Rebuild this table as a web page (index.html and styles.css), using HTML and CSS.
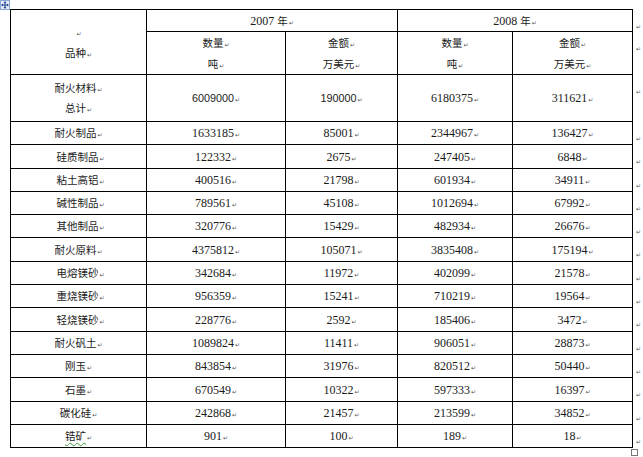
FILE: index.html
```html
<!DOCTYPE html>
<html lang="zh-CN">
<head>
<meta charset="utf-8">
<title>耐火材料进出口</title>
<link rel="stylesheet" href="styles.css">
</head>
<body>
<div class="page">
  <span class="move-handle">
    <svg width="10" height="10" viewBox="0 0 10 10">
      <rect x="0.5" y="0.5" width="9" height="9" fill="#e8eef8" stroke="#8aa6d6"/>
      <path d="M5 1.5v7M1.5 5h7" stroke="#1f3f8f" stroke-width="1"/>
      <path d="M5 1.5l-1.5 1.5h3zM5 8.5l-1.5-1.5h3zM1.5 5l1.5-1.5v3zM8.5 5l-1.5-1.5v3z" fill="#1f3f8f"/>
    </svg>
  </span>
  <table class="grid">
    <colgroup>
      <col class="c-name"><col class="c-q7"><col class="c-a7"><col class="c-q8"><col class="c-a8"><col class="c-end">
    </colgroup>
    <tr class="h1">
      <td rowspan="2" class="cjk two"><div><i class="pm">↵</i></div><div>品种<i class="pm">↵</i></div></td>
      <td colspan="2" class="year">2007 <span class="cjk">年</span><i class="pm">↵</i></td>
      <td colspan="2" class="year">2008 <span class="cjk">年</span><i class="pm">↵</i></td>
      <td class="end"><i class="pm">↵</i></td>
    </tr>
    <tr class="h2">
      <td class="cjk two"><div>数量<i class="pm">↵</i></div><div>吨<i class="pm">↵</i></div></td>
      <td class="cjk two"><div>金额<i class="pm">↵</i></div><div>万美元<i class="pm">↵</i></div></td>
      <td class="cjk two"><div>数量<i class="pm">↵</i></div><div>吨<i class="pm">↵</i></div></td>
      <td class="cjk two"><div>金额<i class="pm">↵</i></div><div>万美元<i class="pm">↵</i></div></td>
      <td class="end"><i class="pm">↵</i></td>
    </tr>
    <tr class="r0">
      <td class="cjk two tot"><div>耐火材料<i class="pm">↵</i></div><div>总计<i class="pm">↵</i></div></td>
      <td class="num sans">6009000<i class="pm">↵</i></td>
      <td class="num sans">190000<i class="pm">↵</i></td>
      <td class="num">6180375<i class="pm">↵</i></td>
      <td class="num">311621<i class="pm">↵</i></td>
      <td class="end"><i class="pm">↵</i></td>
    </tr>
    <tr class="r"><td class="cjk">耐火制品<i class="pm">↵</i></td><td class="num">1633185<i class="pm">↵</i></td><td class="num">85001<i class="pm">↵</i></td><td class="num">2344967<i class="pm">↵</i></td><td class="num">136427<i class="pm">↵</i></td><td class="end"><i class="pm">↵</i></td></tr>
    <tr class="r t"><td class="cjk ind">硅质制品<i class="pm">↵</i></td><td class="num">122332<i class="pm">↵</i></td><td class="num">2675<i class="pm">↵</i></td><td class="num">247405<i class="pm">↵</i></td><td class="num">6848<i class="pm">↵</i></td><td class="end"><i class="pm">↵</i></td></tr>
    <tr class="r"><td class="cjk ind">粘土高铝<i class="pm">↵</i></td><td class="num">400516<i class="pm">↵</i></td><td class="num">21798<i class="pm">↵</i></td><td class="num">601934<i class="pm">↵</i></td><td class="num">34911<i class="pm">↵</i></td><td class="end"><i class="pm">↵</i></td></tr>
    <tr class="r"><td class="cjk ind">碱性制品<i class="pm">↵</i></td><td class="num">789561<i class="pm">↵</i></td><td class="num">45108<i class="pm">↵</i></td><td class="num">1012694<i class="pm">↵</i></td><td class="num">67992<i class="pm">↵</i></td><td class="end"><i class="pm">↵</i></td></tr>
    <tr class="r"><td class="cjk ind">其他制品<i class="pm">↵</i></td><td class="num">320776<i class="pm">↵</i></td><td class="num">15429<i class="pm">↵</i></td><td class="num">482934<i class="pm">↵</i></td><td class="num">26676<i class="pm">↵</i></td><td class="end"><i class="pm">↵</i></td></tr>
    <tr class="r t"><td class="cjk">耐火原料<i class="pm">↵</i></td><td class="num">4375812<i class="pm">↵</i></td><td class="num">105071<i class="pm">↵</i></td><td class="num">3835408<i class="pm">↵</i></td><td class="num">175194<i class="pm">↵</i></td><td class="end"><i class="pm">↵</i></td></tr>
    <tr class="r"><td class="cjk ind">电熔镁砂<i class="pm">↵</i></td><td class="num">342684<i class="pm">↵</i></td><td class="num">11972<i class="pm">↵</i></td><td class="num">402099<i class="pm">↵</i></td><td class="num">21578<i class="pm">↵</i></td><td class="end"><i class="pm">↵</i></td></tr>
    <tr class="r"><td class="cjk ind">重烧镁砂<i class="pm">↵</i></td><td class="num">956359<i class="pm">↵</i></td><td class="num">15241<i class="pm">↵</i></td><td class="num">710219<i class="pm">↵</i></td><td class="num">19564<i class="pm">↵</i></td><td class="end"><i class="pm">↵</i></td></tr>
    <tr class="r t"><td class="cjk ind">轻烧镁砂<i class="pm">↵</i></td><td class="num">228776<i class="pm">↵</i></td><td class="num">2592<i class="pm">↵</i></td><td class="num">185406<i class="pm">↵</i></td><td class="num">3472<i class="pm">↵</i></td><td class="end"><i class="pm">↵</i></td></tr>
    <tr class="r"><td class="cjk">耐火矾土<i class="pm">↵</i></td><td class="num">1089824<i class="pm">↵</i></td><td class="num">11411<i class="pm">↵</i></td><td class="num">906051<i class="pm">↵</i></td><td class="num">28873<i class="pm">↵</i></td><td class="end"><i class="pm">↵</i></td></tr>
    <tr class="r"><td class="cjk">刚玉<i class="pm">↵</i></td><td class="num">843854<i class="pm">↵</i></td><td class="num">31976<i class="pm">↵</i></td><td class="num">820512<i class="pm">↵</i></td><td class="num">50440<i class="pm">↵</i></td><td class="end"><i class="pm">↵</i></td></tr>
    <tr class="r t"><td class="cjk">石墨<i class="pm">↵</i></td><td class="num">670549<i class="pm">↵</i></td><td class="num">10322<i class="pm">↵</i></td><td class="num">597333<i class="pm">↵</i></td><td class="num">16397<i class="pm">↵</i></td><td class="end"><i class="pm">↵</i></td></tr>
    <tr class="r"><td class="cjk">碳化硅<i class="pm">↵</i></td><td class="num">242868<i class="pm">↵</i></td><td class="num">21457<i class="pm">↵</i></td><td class="num">213599<i class="pm">↵</i></td><td class="num">34852<i class="pm">↵</i></td><td class="end"><i class="pm">↵</i></td></tr>
    <tr class="r"><td class="cjk"><span class="spell">锆矿</span><i class="pm">↵</i></td><td class="num">901<i class="pm">↵</i></td><td class="num">100<i class="pm">↵</i></td><td class="num">189<i class="pm">↵</i></td><td class="num">18<i class="pm">↵</i></td><td class="end"><i class="pm">↵</i></td></tr>
  </table>
  <span class="resize-handle"></span>
</div>
</body>
</html>
```

FILE: styles.css
```css
html, body {
  margin: 0;
  padding: 0;
  background: #fff;
}

body {
  font-family: "Noto Sans CJK SC", "Noto Sans", sans-serif;
  color: #1a1a1a;
}

.page {
  position: relative;
  padding: 9px 0 0 10px;
  width: 633px;
  height: 448px;
}

.move-handle {
  position: absolute;
  left: 0;
  top: 0;
  width: 10px;
  height: 10px;
  line-height: 0;
}

.resize-handle {
  position: absolute;
  left: 631px;
  top: 449px;
  width: 5px;
  height: 5px;
  border: 1px solid #777;
  background: #fff;
}

.grid {
  border-collapse: collapse;
  table-layout: fixed;
  width: 633px;
}

.c-name { width: 136px; }
.c-q7 { width: 139px; }
.c-a7 { width: 112px; }
.c-q8 { width: 115px; }
.c-a8 { width: 120px; }
.c-end { width: 11px; }

.grid td {
  border: 1px solid #000;
  padding: 0;
  text-align: center;
  vertical-align: middle;
  white-space: nowrap;
  line-height: 14px;
}

.grid td.end {
  border: none;
  vertical-align: top;
  text-align: left;
  padding: 7px 0 0 2px;
  line-height: 10px;
}

.h1 { height: 22px; }
.h2 { height: 43px; }
.r0 { height: 47px; }
.r { height: 23px; }
.r.t { height: 24px; }

.cjk {
  font-family: "Noto Sans CJK SC", sans-serif;
  font-size: 10.5px;
}

.two div {
  height: 21px;
  line-height: 21px;
}

.tot div {
  height: 20px;
  line-height: 20px;
}

.year {
  font-family: "Liberation Serif", serif;
  font-size: 12px;
}

.year .cjk {
  font-size: 10.5px;
  line-height: 0;
}

.num {
  font-family: "Liberation Serif", serif;
  font-size: 12px;
}

.num.sans {
  font-family: "Liberation Sans", sans-serif;
  font-size: 10.8px;
}

.ind {
  padding-left: 4px !important;
}

.pm {
  font-style: normal;
  font-family: "DejaVu Sans", sans-serif;
  font-size: 6px;
  line-height: 0;
  color: #555;
  margin-left: 1px;
}

.spell {
  text-decoration: underline wavy #3a9a3a;
  text-decoration-thickness: 1px;
  text-underline-offset: 2px;
}
```
